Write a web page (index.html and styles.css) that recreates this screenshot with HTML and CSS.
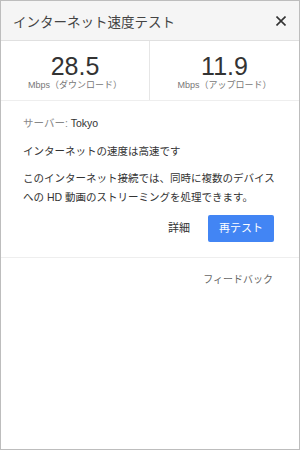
FILE: index.html
```html
<!DOCTYPE html>
<html lang="ja">
<head>
  <meta charset="UTF-8" />
  <meta name="viewport" content="width=device-width, initial-scale=1.0"/>
  <title>インターネット速度テスト</title>
  <link rel="stylesheet" href="styles.css">
</head>
<body>

  <div class="dialog">
    <div class="header">
      <h1 class="title">インターネット速度テスト</h1>
      <button class="close" aria-label="閉じる">
        <svg width="10" height="10" viewBox="0 0 10 10">
          <path d="M0.5 0.5 L9.5 9.5 M9.5 0.5 L0.5 9.5" stroke="#333" stroke-width="1.6" fill="none"/>
        </svg>
      </button>
    </div>

    <div class="speeds">
      <div class="speed">
        <div class="value">28.5</div>
        <div class="unit">Mbps（ダウンロード）</div>
      </div>
      <div class="speed">
        <div class="value">11.9</div>
        <div class="unit">Mbps（アップロード）</div>
      </div>
    </div>

    <div class="result">
      <div class="server"><span class="muted">サーバー:</span> Tokyo</div>
      <div class="verdict">インターネットの速度は高速です</div>
      <p class="desc">このインターネット接続では、同時に複数のデバイスへの HD 動画のストリーミングを処理できます。</p>
      <div class="actions">
        <button class="link-btn">詳細</button>
        <button class="primary">再テスト</button>
      </div>
    </div>

    <div class="footer">
      <a class="feedback" href="#">フィードバック</a>
    </div>
  </div>

</body>
</html>
```

FILE: styles.css
```css
* {
  box-sizing: border-box;
}

body {
  margin: 0;
  padding: 0;
  background: #ffffff;
  font-family: "Liberation Sans", "Noto Sans CJK JP", sans-serif;
  color: #333;
}

.dialog {
  width: 300px;
  height: 450px;
  border: 1px solid #bdbdbd;
  background: #ffffff;
}

.header {
  height: 40px;
  display: flex;
  align-items: center;
  justify-content: space-between;
  padding: 5px 13px 0 12px;
  background: #f5f5f5;
  border-bottom: 1px solid #e0e0e0;
}

.title {
  margin: 0;
  font-size: 13.5px;
  font-weight: normal;
  color: #444;
  line-height: 20px;
}

.close {
  border: none;
  background: none;
  padding: 0;
  margin-top: -5px;
  display: flex;
  cursor: pointer;
}

.speeds {
  display: grid;
  grid-template-columns: 1fr 1fr;
  border-bottom: 1px solid #eeeeee;
}

.speed {
  text-align: center;
  padding: 12px 0 9px;
}

.speed:first-child {
  border-right: 1px solid #e6e6e6;
}

.value {
  font-size: 25px;
  line-height: 26px;
  color: #333;
}

.unit {
  font-size: 9px;
  line-height: 12px;
  color: #777;
}

.result {
  padding: 13px 22px 15px 22px;
  font-size: 10.5px;
  line-height: 19px;
  border-bottom: 1px solid #eeeeee;
}

.muted {
  color: #888;
}

.verdict {
  margin-top: 9px;
}

.desc {
  margin: 8px 0 0;
}

.actions {
  display: flex;
  justify-content: flex-end;
  align-items: center;
  gap: 18px;
  margin-top: 8px;
  margin-right: 3px;
}

.link-btn {
  border: none;
  background: none;
  padding: 0;
  font: inherit;
  font-size: 11px;
  color: #333;
  cursor: pointer;
}

.primary {
  width: 66px;
  height: 27px;
  border: none;
  border-radius: 2px;
  background: #4285f4;
  color: #ffffff;
  font: inherit;
  font-size: 11px;
  cursor: pointer;
}

.footer {
  display: flex;
  justify-content: flex-end;
  padding: 12px 26px 0 0;
}

.feedback {
  font-size: 10px;
  line-height: 19px;
  color: #666;
  text-decoration: none;
}
```
